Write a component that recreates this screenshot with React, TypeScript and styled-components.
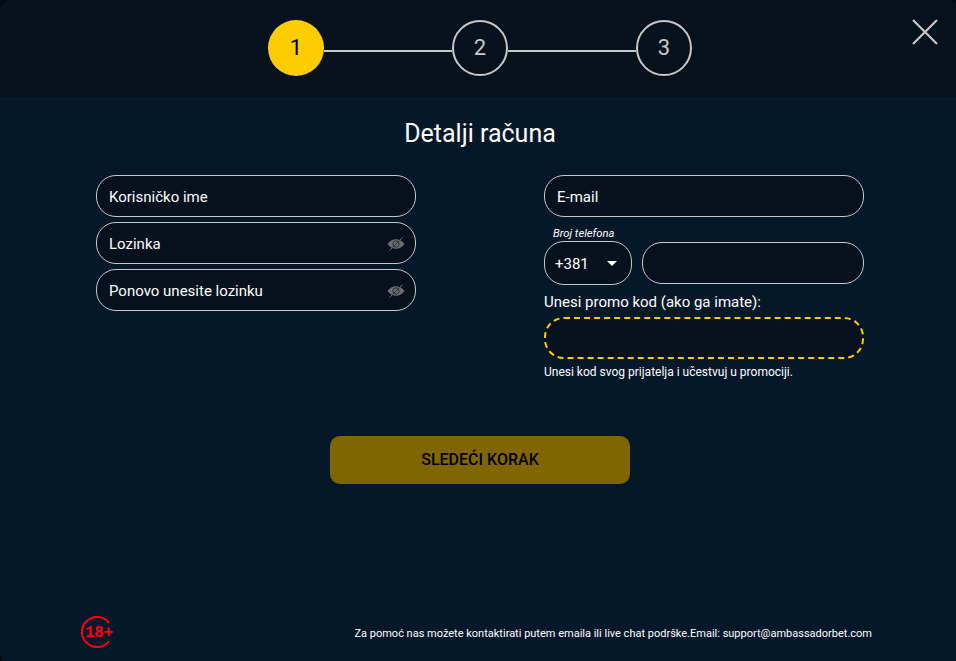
import styled, { createGlobalStyle } from "styled-components";

const GlobalStyle = createGlobalStyle`
  html, body {
    margin: 0;
    padding: 0;
    width: 956px;
    height: 661px;
    overflow: hidden;
    background: #010a12;
  }
  * {
    box-sizing: border-box;
  }
`;

const Modal = styled.div`
  display: flex;
  flex-direction: column;
  width: 960px;
  height: 664px;
  border-radius: 12px;
  overflow: hidden;
  font-family: Roboto, "Liberation Sans", sans-serif;
  color: #ffffff;
  background: #04182a;
`;

const Header = styled.div`
  position: relative;
  display: flex;
  justify-content: center;
  flex: none;
  height: 97px;
  padding-top: 20px;
  background: #05121e;
`;

const Stepper = styled.div`
  display: flex;
  align-items: flex-start;
`;

const Step = styled.div<{ $active?: boolean }>`
  display: flex;
  align-items: center;
  justify-content: center;
  width: 56px;
  height: 56px;
  padding-bottom: 1px;
  border-radius: 50%;
  font-size: 22px;
  color: ${(p) => (p.$active ? "#000000" : "#c8c8c8")};
  background: ${(p) => (p.$active ? "#ffcc00" : "transparent")};
  border: ${(p) => (p.$active ? "none" : "2px solid #c8c8c8")};
`;

const StepLine = styled.div`
  width: 128px;
  height: 2px;
  margin-top: 30px;
  background: #c8c8c8;
`;

const CloseButton = styled.button`
  position: absolute;
  top: 18px;
  right: 21px;
  display: flex;
  padding: 0;
  border: none;
  background: none;
`;

const Body = styled.div`
  display: flex;
  flex-direction: column;
  flex: 1;
  padding: 0 80px;
`;

const Title = styled.h2`
  margin: 20px 0 0;
  font-size: 25px;
  font-weight: 400;
  line-height: 34px;
  text-align: center;
`;

const Columns = styled.div`
  display: grid;
  grid-template-columns: 320px 320px;
  justify-content: space-between;
  height: 227px;
  margin: 24px 16px 0;
`;

const Column = styled.div`
  display: flex;
  flex-direction: column;
  gap: 5px;
`;

const Field = styled.div`
  display: flex;
  align-items: center;
  justify-content: space-between;
  flex: none;
  height: 42px;
  padding: 2px 10px 0 12px;
  border: 1px solid #c8c8c8;
  border-radius: 20px;
  font-size: 15px;
  background: #05121e;
`;

const PhoneLabel = styled.div`
  margin: 6px 0 -4px 9px;
  font-size: 11.2px;
  font-style: italic;
  line-height: 12px;
`;

const PhoneRow = styled.div`
  display: flex;
  align-items: center;
  gap: 10px;
`;

const PhoneField = styled(Field)`
  flex: 1;
`;

const Prefix = styled.div`
  display: flex;
  align-items: center;
  justify-content: space-between;
  flex: none;
  width: 88px;
  height: 44px;
  padding: 2px 14px 0 10px;
  border: 1px solid #c8c8c8;
  border-radius: 20px;
  font-size: 15px;
  background: #05121e;
`;

const Caret = styled.span`
  width: 0;
  height: 0;
  margin-bottom: 2px;
  border-left: 5.5px solid transparent;
  border-right: 5.5px solid transparent;
  border-top: 5.5px solid #ffffff;
`;

const PromoLabel = styled.div`
  margin: 3px 0 1px;
  font-size: 15px;
  line-height: 18px;
`;

const PromoField = styled.div`
  height: 42px;
  border: 2px dashed #ffcc00;
  border-radius: 20px;
  background: #05121e;
`;

const PromoHint = styled.div`
  margin-top: 1px;
  font-size: 12px;
  line-height: 14px;
`;

const NextButton = styled.button`
  align-self: center;
  width: 300px;
  height: 48px;
  margin-top: 34px;
  padding: 0 0 2px;
  border: none;
  border-radius: 10px;
  font-family: inherit;
  font-size: 16px;
  font-weight: 500;
  color: #000000;
  background: #806600;
`;

const Footer = styled.div`
  display: flex;
  align-items: center;
  justify-content: space-between;
  margin-top: 132px;
  padding-right: 8px;
`;

const AgeBadge = styled.div`
  position: relative;
  display: flex;
  width: 36px;
  height: 34px;
`;

const AgeText = styled.span`
  position: absolute;
  left: 5px;
  top: 8px;
  font-family: "Liberation Mono", monospace;
  font-size: 16px;
  font-weight: 700;
  line-height: 18px;
  letter-spacing: -0.3px;
  color: #ff0010;
`;

const HelpText = styled.div`
  font-size: 11px;
`;

const EyeOff = () => (
  <svg width="18" height="14" viewBox="0 0 18 14">
    <path
      fill="#6b6e70"
      d="M0.5 7C2.6 3.9 5.6 2.2 9 2.2S15.4 3.9 17.5 7C15.4 10.1 12.4 11.8 9 11.8S2.6 10.1 0.5 7Z"
    />
    <circle cx="9" cy="7" r="3.2" fill="none" stroke="#2b3236" strokeWidth="1" />
    <path d="M2.5 13.5L15.5 0.5" stroke="#6b6e70" strokeWidth="1" />
    <path d="M5.5 10.5L12.5 3.5" stroke="#2b3236" strokeWidth="1" />
  </svg>
);

const App = () => {
  return (
    <Modal>
      <GlobalStyle />
      <Header>
        <Stepper>
          <Step $active>1</Step>
          <StepLine />
          <Step>2</Step>
          <StepLine />
          <Step>3</Step>
        </Stepper>
        <CloseButton aria-label="close">
          <svg width="28" height="28" viewBox="0 0 28 28">
            <path d="M2 2L26 26M26 2L2 26" stroke="#c8c8c8" strokeWidth="2.2" />
          </svg>
        </CloseButton>
      </Header>
      <Body>
        <Title>Detalji računa</Title>
        <Columns>
          <Column>
            <Field>Korisničko ime</Field>
            <Field>
              Lozinka
              <EyeOff />
            </Field>
            <Field>
              Ponovo unesite lozinku
              <EyeOff />
            </Field>
          </Column>
          <Column>
            <Field>E-mail</Field>
            <PhoneLabel>Broj telefona</PhoneLabel>
            <PhoneRow>
              <Prefix>
                +381
                <Caret />
              </Prefix>
              <PhoneField />
            </PhoneRow>
            <PromoLabel>Unesi promo kod (ako ga imate):</PromoLabel>
            <PromoField />
            <PromoHint>Unesi kod svog prijatelja i učestvuj u promociji.</PromoHint>
          </Column>
        </Columns>
        <NextButton>SLEDEĆI KORAK</NextButton>
        <Footer>
          <AgeBadge>
            <svg width="36" height="34" viewBox="0 0 36 34">
              <path d="M29 7A15 15 0 1 0 29 25" fill="none" stroke="#ff0010" strokeWidth="2" />
            </svg>
            <AgeText>18+</AgeText>
          </AgeBadge>
          <HelpText>Za pomoć nas možete kontaktirati putem emaila ili live chat podrške.Email: support@ambassadorbet.com</HelpText>
        </Footer>
      </Body>
    </Modal>
  );
};

export default App;
